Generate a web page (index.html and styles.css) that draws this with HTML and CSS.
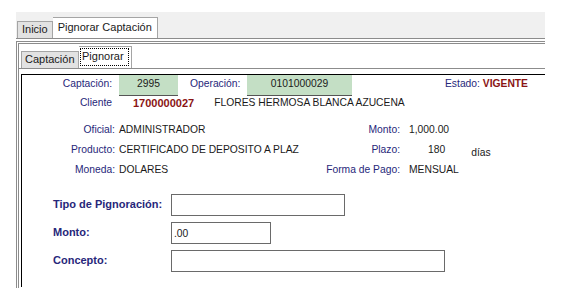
FILE: index.html
```html
<!DOCTYPE html>
<html lang="es">

<head>
    <meta charset="UTF-8">
    <title>Pignorar Captación</title>
    <link rel="stylesheet" href="styles.css">
</head>

<body>
    <div class="window">
        <!-- Main tabs -->
        <div class="tabs">
            <div class="tab">Inicio</div>
            <div class="tab active">Pignorar Captación</div>
        </div>
        <div class="panel">
            <!-- Sub tabs -->
            <div class="subtabs">
                <div class="subtab">Captación</div>
                <div class="subtab active"><span>Pignorar</span></div>
            </div>
            <div class="content">
                <div class="row head">
                    <div class="lbl lbl-cap">Captación:</div>
                    <div class="box box-cap">2995</div>
                    <div class="lbl lbl-op">Operación:</div>
                    <div class="box box-op">0101000029</div>
                    <div class="lbl lbl-estado">Estado: <b class="red">VIGENTE</b></div>
                </div>
                <div class="row client">
                    <div class="lbl lbl-cap">Cliente</div>
                    <div class="red code">1700000027</div>
                    <div class="val name">FLORES HERMOSA BLANCA AZUCENA</div>
                </div>
                <div class="row info first">
                    <div class="lbl lbl-left">Oficial:</div>
                    <div class="val val-left">ADMINISTRADOR</div>
                    <div class="lbl lbl-right">Monto:</div>
                    <div class="val val-right">1,000.00</div>
                </div>
                <div class="row info">
                    <div class="lbl lbl-left">Producto:</div>
                    <div class="val val-left">CERTIFICADO DE DEPOSITO A PLAZ</div>
                    <div class="lbl lbl-right">Plazo:</div>
                    <div class="val plazo">180</div>
                    <div class="val dias">días</div>
                </div>
                <div class="row info">
                    <div class="lbl lbl-left">Moneda:</div>
                    <div class="val val-left">DOLARES</div>
                    <div class="lbl lbl-right">Forma de Pago:</div>
                    <div class="val val-right">MENSUAL</div>
                </div>

                <!-- Pignoracion form -->
                <div class="form">
                    <div class="field">
                        <label class="flbl">Tipo de Pignoración:</label>
                        <input class="input input-tipo" type="text" value="">
                    </div>
                    <div class="field">
                        <label class="flbl">Monto:</label>
                        <input class="input input-monto" type="text" value=".00">
                    </div>
                    <div class="field">
                        <label class="flbl">Concepto:</label>
                        <input class="input input-concepto" type="text" value="">
                    </div>
                </div>
            </div>
        </div>
    </div>
</body>

</html>
```

FILE: styles.css
```css
html,
body {
    margin: 0;
    background-color: #ffffff;
}

body {
    font-family: 'Liberation Sans', Arial, sans-serif;
    font-size: 10.3px;
    color: #1a1a1a;
}

.window {
    width: 529px;
    margin: 12px 0 0 16px;
    white-space: nowrap;
}

/* main tab strip */
.tabs {
    height: 27px;
    background-color: #f0f0f0;
    border-bottom: 1px solid #8c8c8c;
    display: flex;
    align-items: flex-end;
    padding-left: 1px;
    box-sizing: border-box;
}

.tab {
    height: 17px;
    line-height: 15px;
    padding: 0 4px;
    background-color: #e2e2e2;
    border: 1px solid #a5a5a5;
    border-bottom: none;
    box-sizing: border-box;
    font-size: 11px;
}

.tab.active {
    height: 21px;
    line-height: 19px;
    padding: 0 5px;
    background-color: #ffffff;
    border-left: none;
}

.panel {
    margin-top: 2px;
    border-top: 3px double #8c8c8c;
    border-left: 3px double #8c8c8c;
    height: 244px;
}

/* sub tab strip */
.subtabs {
    height: 24px;
    border-bottom: 1px solid #8c8c8c;
    display: flex;
    align-items: flex-end;
    padding-left: 2px;
}

.subtab {
    height: 17px;
    line-height: 14px;
    width: 58px;
    padding-left: 3px;
    background-color: #e2e2e2;
    border: 1px solid #a5a5a5;
    border-bottom: none;
    box-sizing: border-box;
    font-size: 11px;
}

.subtab.active {
    height: 22px;
    width: 53px;
    padding: 1px 2px 0 1px;
    background-color: #ffffff;
    border-left: none;
}

.subtab.active span {
    display: block;
    height: 18px;
    line-height: 15px;
    border: 1px dotted #000000;
    box-sizing: border-box;
    padding-left: 1px;
}

.content {
    margin: 5px 0 0 2px;
    border-top: 1px solid #000000;
    border-left: 1px solid #000000;
    height: 212px;
}

.row {
    display: flex;
    line-height: 14px;
}

.lbl {
    color: #27277a;
}

.red {
    color: #8a1414;
}

.head {
    height: 21px;
    line-height: 17px;
}

.lbl-cap {
    width: 90px;
    text-align: right;
}

.box {
    background-color: #c4dfc5;
    border-bottom: 1px solid #555555;
    text-align: center;
    box-sizing: border-box;
    height: 21px;
}

.box-cap {
    width: 59px;
    margin-left: 7px;
}

.lbl-op {
    margin-left: 12px;
    width: 53px;
}

.box-op {
    width: 105px;
    margin-left: 4px;
}

.lbl-estado {
    margin-left: 93px;
}

.code {
    font-weight: bold;
    margin-left: 21px;
    font-size: 11px;
}

.name {
    margin-left: 20px;
}

.info {
    margin-top: 6px;
}

.info.first {
    margin-top: 13px;
}

.lbl-left {
    width: 93px;
    text-align: right;
}

.val-left {
    width: 174px;
    margin-left: 4px;
}

.lbl-right {
    width: 107px;
    text-align: right;
}

.val-right {
    margin-left: 9px;
}

.plazo {
    margin-left: 28px;
}

.dias {
    margin-left: 26px;
    position: relative;
    top: 3px;
}

/* form */
.form {
    margin-top: 17px;
    display: flex;
    flex-direction: column;
    gap: 6px;
}

.field {
    display: flex;
    align-items: flex-start;
}

.flbl {
    width: 118px;
    margin-left: 31px;
    padding-top: 3px;
    line-height: 14px;
    font-weight: bold;
    color: #27277a;
    font-size: 11px;
}

.input {
    height: 22px;
    border: 1px solid #6a6a6a;
    border-radius: 0;
    box-sizing: border-box;
    margin: 0;
    padding: 0 2px;
    font-family: 'Liberation Sans', Arial, sans-serif;
    font-size: 10.3px;
    color: #1a1a1a;
    outline: none;
}

.input-tipo {
    width: 174px;
}

.input-monto {
    width: 100px;
}

.input-concepto {
    width: 274px;
}
```
